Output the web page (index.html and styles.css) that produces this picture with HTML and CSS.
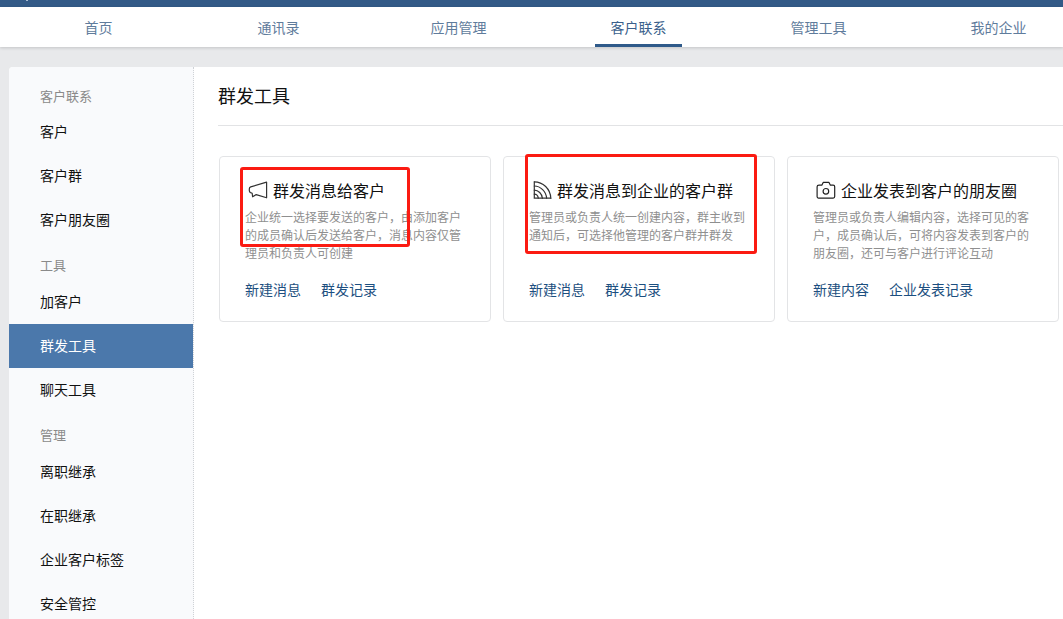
FILE: index.html
```html
<!DOCTYPE html>
<html lang="zh-CN">
<head>
<meta charset="utf-8">
<title>群发工具</title>
<link rel="stylesheet" href="styles.css">
</head>
<body>
<div class="topbar"><span class="topbar-logo"></span></div>
<nav class="tabs">
  <a class="tab"><span class="tab-label">首页</span></a>
  <a class="tab"><span class="tab-label">通讯录</span></a>
  <a class="tab"><span class="tab-label">应用管理</span></a>
  <a class="tab is-active"><span class="tab-label">客户联系</span></a>
  <a class="tab"><span class="tab-label">管理工具</span></a>
  <a class="tab"><span class="tab-label">我的企业</span></a>
</nav>
<div class="shell">
  <aside class="side">
    <div class="side-group side-group-first">客户联系</div>
    <a class="side-item">客户</a>
    <a class="side-item">客户群</a>
    <a class="side-item">客户朋友圈</a>
    <div class="side-group">工具</div>
    <a class="side-item">加客户</a>
    <a class="side-item is-active">群发工具</a>
    <a class="side-item">聊天工具</a>
    <div class="side-group">管理</div>
    <a class="side-item">离职继承</a>
    <a class="side-item">在职继承</a>
    <a class="side-item">企业客户标签</a>
    <a class="side-item">安全管控</a>
  </aside>
  <main class="main">
    <h1 class="page-title">群发工具</h1>
    <section class="cards">
      <article class="card">
        <h2 class="card-title">
          <svg class="card-icon" width="22" height="20" viewBox="0 0 22 20" fill="none" stroke="#333" stroke-width="1.2" stroke-linejoin="round" stroke-linecap="round"><path d="M20.6 2.2V17.8L10.2 14.6 6.6 16.8 6.2 13.2 4.6 12.6C3.7 12.2 3.3 11.4 3.3 10.4V9C3.3 8 3.8 7.3 4.7 6.9Z"/></svg>
          群发消息给客户
        </h2>
        <p class="card-desc">企业统一选择要发送的客户，由添加客户的成员确认后发送给客户，消息内容仅管理员和负责人可创建</p>
        <div class="card-links"><a class="link">新建消息</a><a class="link">群发记录</a></div>
      </article>
      <article class="card">
        <h2 class="card-title">
          <svg class="card-icon" width="22" height="20" viewBox="0 0 22 20" fill="none" stroke="#333" stroke-width="1.2" stroke-linecap="round"><path d="M4.3 1.8C13 1.8 20.4 9 20.8 18.2"/><path d="M4.3 6C10.5 6 16.2 11.6 16.6 18.2"/><path d="M4.3 10.2C8.4 10.2 12 13.8 12.4 18.2"/><path d="M4.3 1.8V18.2H20.8"/><path d="M4.3 14.2C6.2 14.2 8 16 8.3 18.2"/></svg>
          群发消息到企业的客户群
        </h2>
        <p class="card-desc">管理员或负责人统一创建内容，群主收到通知后，可选择他管理的客户群并群发</p>
        <div class="card-links"><a class="link">新建消息</a><a class="link">群发记录</a></div>
      </article>
      <article class="card">
        <h2 class="card-title">
          <svg class="card-icon" width="22" height="20" viewBox="0 0 22 20" fill="none" stroke="#222" stroke-width="1.2" stroke-linejoin="round"><path d="M5 5.2H7.8L9.2 2.4H15L16.4 5.2H19.2C20.1 5.2 20.7 5.8 20.7 6.7V16.6C20.7 17.5 20.1 18.1 19.2 18.1H4.6C3.7 18.1 3.1 17.5 3.1 16.6V6.7C3.1 5.8 3.8 5.2 5 5.2Z"/><circle cx="11.9" cy="11.3" r="2.8"/></svg>
          企业发表到客户的朋友圈
        </h2>
        <p class="card-desc">管理员或负责人编辑内容，选择可见的客户，成员确认后，可将内容发表到客户的朋友圈，还可与客户进行评论互动</p>
        <div class="card-links"><a class="link">新建内容</a><a class="link">企业发表记录</a></div>
      </article>
    </section>
  </main>
</div>
<div class="mark mark-one"></div>
<div class="mark mark-two"></div>
</body>
</html>
```

FILE: styles.css
```css
* { box-sizing: border-box; }
html, body { height: 100%; overflow: hidden; }
body {
  margin: 0;
  position: relative;
  background: #e8e9eb;
  font-family: "Noto Sans CJK SC", "Liberation Sans", sans-serif;
  color: #111;
}
.topbar { height: 7px; background: #335a87; position: relative; }
.topbar-logo {
  position: absolute; left: 26px; top: 0;
  width: 2px; height: 1px; background: #a9bdd3;
}
.tabs {
  height: 40px;
  display: flex;
  padding-left: 8.5px;
  background: #fff;
  box-shadow: 0 1px 3px rgba(0, 0, 0, .16);
  position: relative;
}
.tab {
  flex: none;
  width: 180px;
  display: flex;
  justify-content: center;
  font-size: 14px;
  line-height: 40px;
  color: #5f7c9c;
}
.tab-label { width: 87px; height: 40px; text-align: center; }
.tab.is-active { color: #3a5f8c; }
.tab.is-active .tab-label { border-bottom: 3px solid #2f5a8a; }
.shell {
  display: flex;
  margin: 20px 0 0 9px;
  width: 1100px;
  height: 552px;
  background: #fff;
  border-radius: 4px 0 0 0;
  overflow: hidden;
}
.side {
  width: 185px;
  flex: none;
  padding-top: 16px;
  background: #f9fafc;
  border-right: 1px dotted #cfd2d6;
}
.side-group {
  height: 26px;
  margin-top: 12px;
  padding-left: 31px;
  font-size: 13px;
  line-height: 22px;
  color: #8a8a8a;
}
.side-group-first { margin-top: 0; height: 27px; line-height: 26px; }
.side-item {
  display: block;
  height: 44px;
  padding-left: 31px;
  font-size: 14px;
  line-height: 43px;
  color: #111;
}
.side-item.is-active { background: #4b78ab; color: #fff; width: 184px; }
.main { flex: 1; padding-left: 24px; }
.page-title {
  margin: 0;
  height: 59px;
  font-size: 18px;
  font-weight: 400;
  line-height: 56px;
  color: #111;
  border-bottom: 1px solid #e2e3e5;
}
.cards { display: flex; gap: 12px; margin: 30px 0 0 1px; }
.card {
  width: 272px;
  height: 166px;
  padding: 21px 26px 0 25px;
  border: 1px solid #e3e4e6;
  border-radius: 4px;
  background: #fff;
}
.card-title {
  display: flex;
  align-items: center;
  gap: 5px;
  margin: 0;
  height: 24px;
  font-size: 16px;
  font-weight: 400;
  line-height: 24px;
  color: #111;
  white-space: nowrap;
}
.card-icon { margin-left: 1px; flex: none; }
.card-desc {
  margin: 6px 0 0;
  height: 54px;
  font-size: 12px;
  line-height: 18px;
  color: #8f8f8f;
}
.card-links {
  display: flex;
  gap: 20px;
  margin-top: 17px;
  font-size: 14px;
  line-height: 20px;
}
.link { color: #1c4f80; }
.mark {
  position: absolute;
  border: 3px solid #fb1b12;
  border-radius: 3px;
}
.mark-one { left: 240px; top: 167px; width: 170px; height: 80px; }
.mark-two { left: 525px; top: 154px; width: 232px; height: 100px; }
```
